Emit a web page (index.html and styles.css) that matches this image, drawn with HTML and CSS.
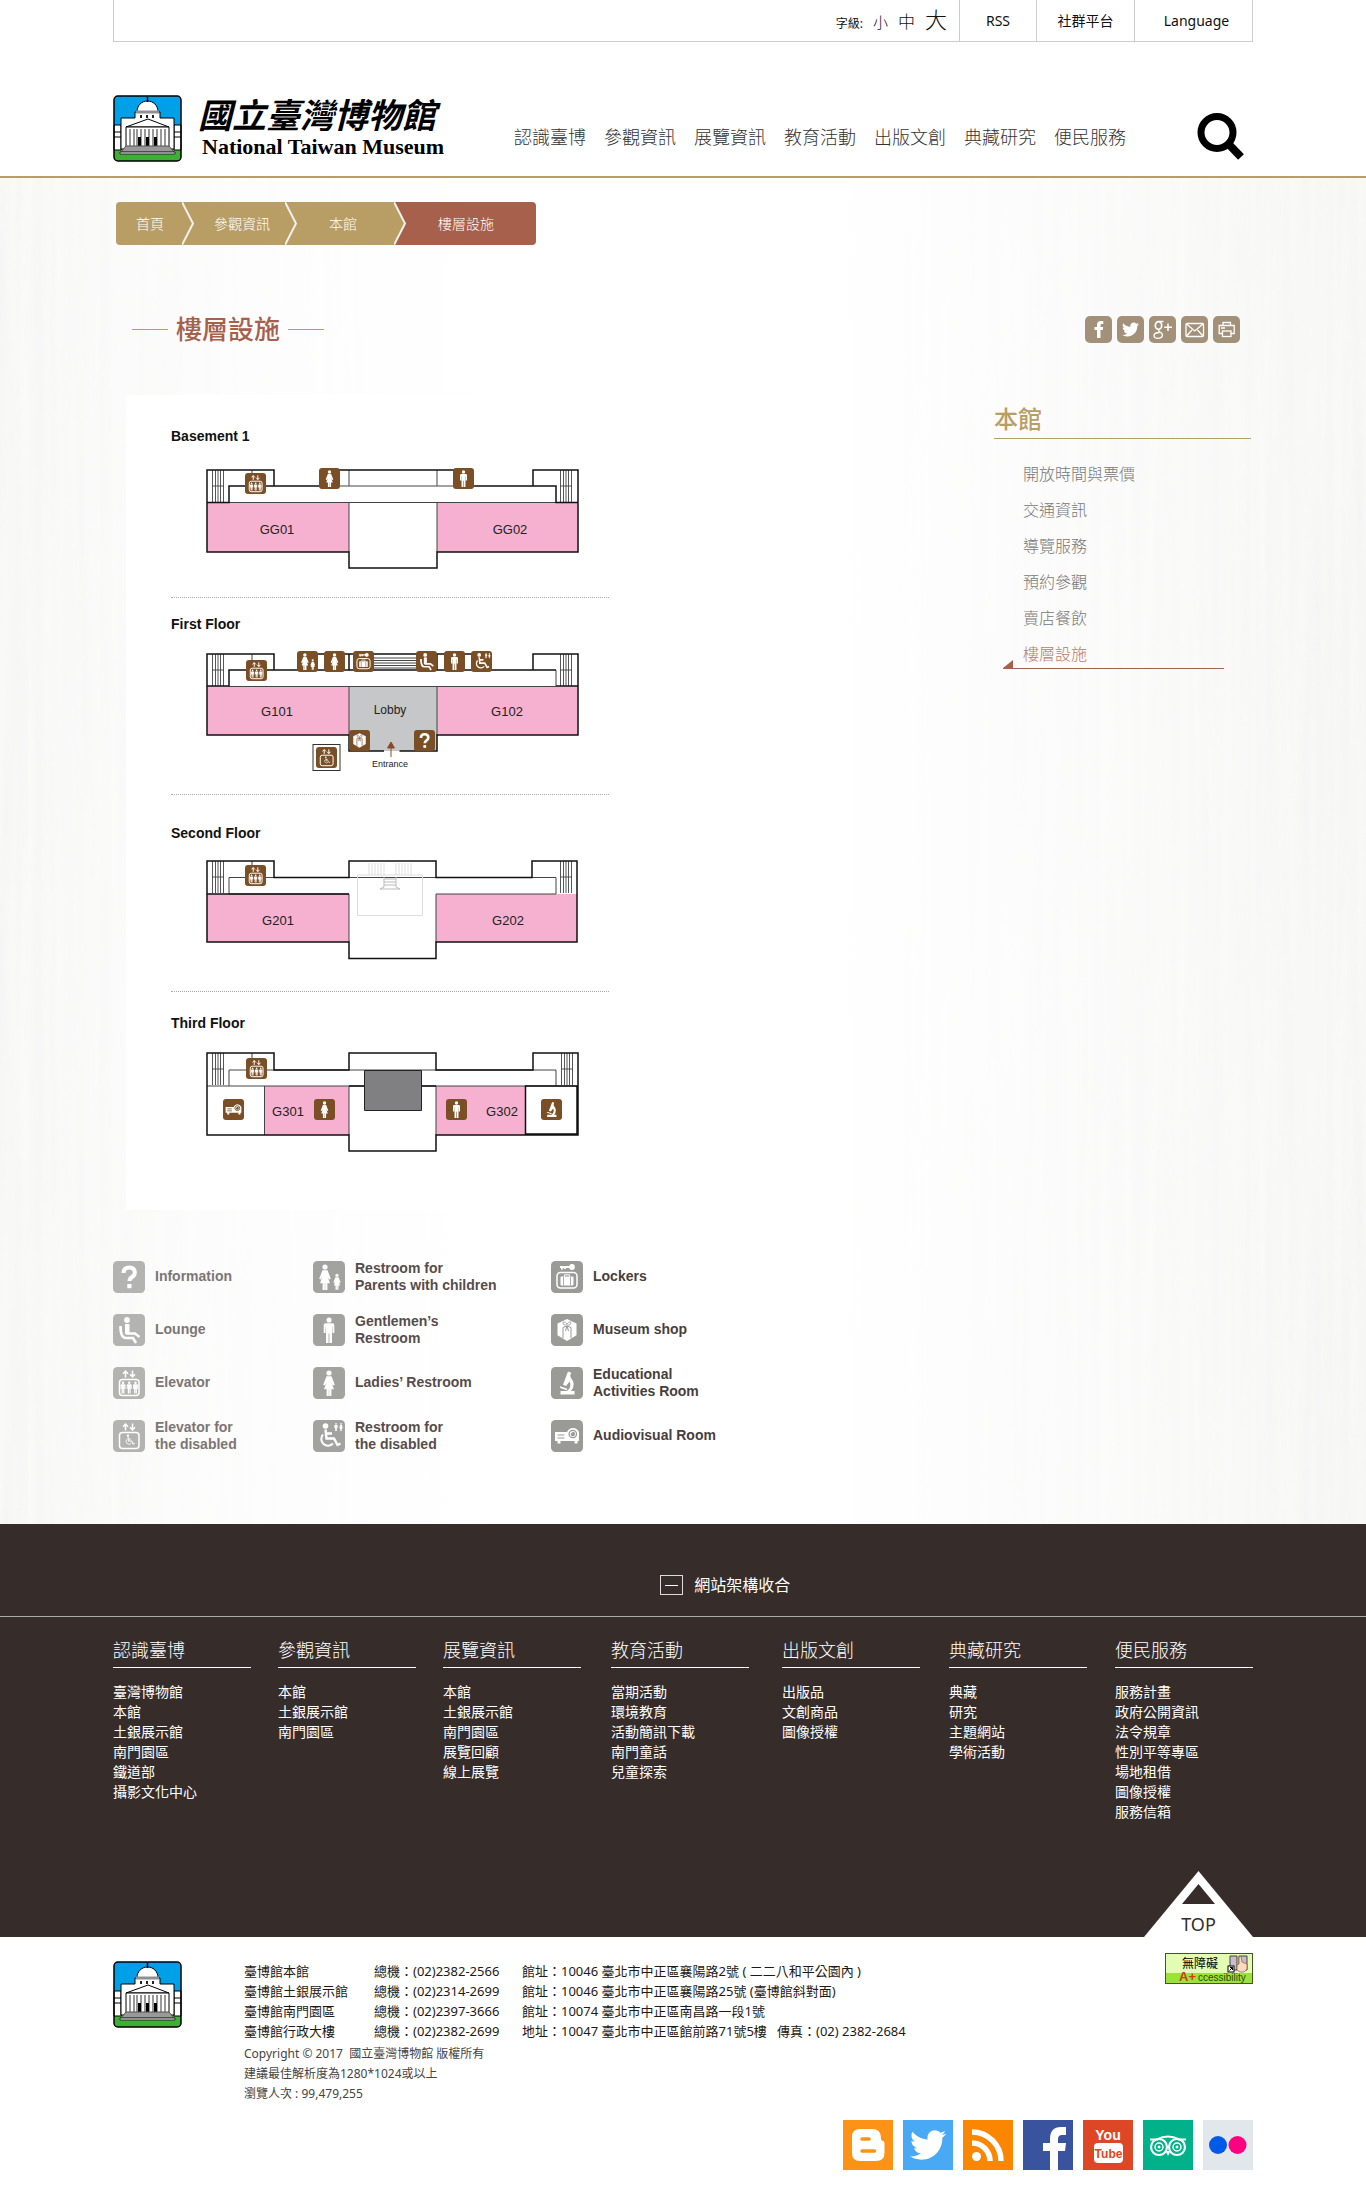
FILE: index.html
```html
<!DOCTYPE html>
<html lang="zh-Hant">
<head>
<meta charset="utf-8">
<meta name="viewport" content="width=device-width, initial-scale=1">
<title>樓層設施 - 國立臺灣博物館</title>
<link rel="stylesheet" href="styles.css">
</head>
<body>
<svg class="sprite" aria-hidden="true">
  <symbol id="museum" viewBox="0 0 69 67">
    <rect x="1" y="1" width="67" height="65" rx="4" fill="#00a0e9"/>
    <path d="M1 54h67v8a4 4 0 0 1-4 4H5a4 4 0 0 1-4-4z" fill="#3fae35"/>
    <path d="M1 30h7v25H1zM61 30h7v25h-7z" fill="#fff" stroke="#000"/>
    <path d="M1 37h7M61 37h7M1 42h7M61 42h7" stroke="#000"/>
    <path d="M8 54V23h14v-6h2C24 10 29 6 34.500 6S45 10 45 17h2v6h14v31z" fill="#fff" stroke="#000"/>
    <path d="M34.500 2v5" stroke="#000" stroke-width="1.500"/>
    <path d="M23 15.500h23v3H23z" fill="#8f8f8f"/>
    <path d="M27 20h2v3h-2zM33 20h2v3h-2zM39 20h2v3h-2z" fill="#222"/>
    <path d="M13 32l22-8 21 8z" fill="#fff" stroke="#000"/>
    <path d="M13 32h43v20H13z" fill="#fff" stroke="#000"/>
    <path d="M17 34v18M21 34v18M24 34v18M28 34v18M32 34v18M36 34v18M40 34v18M44 34v18M48 34v18M52 34v18" stroke="#333"/>
    <path d="M25 42h3v10h-3zM33 42h3v10h-3zM41 42h3v10h-3z" fill="#000"/>
    <path d="M13 51h43l5 6H8z" fill="#999" stroke="#555"/>
    <path d="M7 57h55v2H7z" fill="#ddd" stroke="#000" stroke-width=".7"/>
    <rect x="1" y="1" width="67" height="65" rx="4" fill="none" stroke="#000" stroke-width="1.500"/>
  </symbol>

  <symbol id="woman-shape" viewBox="0 0 32 32">
    <circle cx="16" cy="6" r="2.600"/>
    <path d="M13.500 9.300h5l3.300 8.400-1.700.7-1.700-3.500 2.600 7.300h-2.600V29h-2.200v-6.800h-.4V29h-2.200v-6.800H11l2.600-7.300-1.700 3.500-1.700-.7z"/>
  </symbol>
  <symbol id="man-shape" viewBox="0 0 32 32">
    <circle cx="16" cy="6" r="2.600"/>
    <path d="M12.500 9.300h7q1.800 0 1.800 1.800V19h-1.900v-6H19v16h-2.600V19.500h-.8V29H13V13h-.4v6h-1.900v-7.900q0-1.800 1.800-1.800z"/>
  </symbol>
  <symbol id="chair-shape" viewBox="0 0 32 32">
    <circle cx="12.500" cy="6" r="2.800"/>
    <g fill="none" stroke-width="2.400" stroke="#fff">
      <path d="M12.500 9.500l1 9H21l3.500 6.500 3-1.500M13 13.500h6"/>
      <path d="M10 14.500a6.500 6.500 0 1 0 10 9" stroke-width="2"/>
    </g>
  </symbol>
  <symbol id="arrows-shape" viewBox="0 0 32 32">
    <path d="M12.500 10.500V4M10 6.700L12.500 4 15 6.700M19.500 3.500V10M17 7.300l2.500 2.700L22 7.300" fill="none" stroke="#fff" stroke-width="1.500"/>
  </symbol>

  <symbol id="i-info" viewBox="0 0 32 32">
    <rect width="32" height="32" rx="4.500" fill="currentColor"/>
    <path d="M10.500 12q0-5.500 5.700-5.500 5.600 0 5.600 5 0 3-3 4.800-2.300 1.500-2.300 3.700" fill="none" stroke="#fff" stroke-width="4"/>
    <path d="M14.300 23h4.200v4.200h-4.200z" fill="#fff"/>
  </symbol>
  <symbol id="i-woman" viewBox="0 0 32 32">
    <rect width="32" height="32" rx="4.500" fill="currentColor"/>
    <use href="#woman-shape" width="32" height="32" fill="#fff"/>
  </symbol>
  <symbol id="i-man" viewBox="0 0 32 32">
    <rect width="32" height="32" rx="4.500" fill="currentColor"/>
    <use href="#man-shape" width="32" height="32" fill="#fff"/>
  </symbol>
  <symbol id="i-parents" viewBox="0 0 32 32">
    <rect width="32" height="32" rx="4.500" fill="currentColor"/>
    <use href="#woman-shape" x="-4" width="32" height="32" fill="#fff"/>
    <use href="#woman-shape" x="14" y="10.500" width="20" height="20" fill="#fff"/>
  </symbol>
  <symbol id="i-lounge" viewBox="0 0 32 32">
    <rect width="32" height="32" rx="4.500" fill="currentColor"/>
    <circle cx="14" cy="6" r="2.900" fill="#fff"/>
    <path d="M14.500 10v9.500H22l4.500 3.500M7.500 12q0 12 5.500 12h7l3 5" fill="none" stroke="#fff" stroke-width="2.600"/>
    <path d="M12 10h4.500v10H12z" fill="#fff"/>
  </symbol>
  <symbol id="i-lift" viewBox="0 0 32 32">
    <rect width="32" height="32" rx="4.500" fill="currentColor"/>
    <use href="#arrows-shape" width="32" height="32"/>
    <rect x="6.500" y="12.500" width="19.500" height="16" rx="3" fill="none" stroke="#fff" stroke-width="1.500"/>
    <use href="#man-shape" x="2.500" y="13" width="15" height="15" fill="#fff"/>
    <use href="#man-shape" x="8.700" y="13" width="15" height="15" fill="#fff"/>
    <use href="#man-shape" x="15" y="13" width="15" height="15" fill="#fff"/>
  </symbol>
  <symbol id="i-lift-access" viewBox="0 0 32 32">
    <rect width="32" height="32" rx="4.500" fill="currentColor"/>
    <use href="#arrows-shape" width="32" height="32"/>
    <rect x="6.500" y="12.500" width="19.500" height="16" rx="3" fill="none" stroke="#fff" stroke-width="1.500"/>
    <use href="#chair-shape" x="9.500" y="13" width="14" height="14" fill="#fff"/>
  </symbol>
  <symbol id="i-access" viewBox="0 0 32 32">
    <rect width="32" height="32" rx="4.500" fill="currentColor"/>
    <use href="#chair-shape" width="32" height="32" fill="#fff"/>
    <use href="#man-shape" x="18" y="2" width="10" height="10" fill="#fff"/>
    <use href="#woman-shape" x="23" y="2" width="10" height="10" fill="#fff"/>
  </symbol>
  <symbol id="i-locker" viewBox="0 0 32 32">
    <rect width="32" height="32" rx="4.500" fill="currentColor"/>
    <circle cx="21" cy="6" r="2.900" fill="#fff"/>
    <path d="M9 6h11M11 6v2.500M14 6v2" stroke="#fff" stroke-width="2"/>
    <rect x="6" y="11.500" width="20" height="15.500" rx="3.500" fill="none" stroke="#fff" stroke-width="1.500"/>
    <rect x="9.500" y="15.500" width="13" height="9" rx="1" fill="#fff"/>
    <path d="M13.500 15.500v-1.700h5v1.700" fill="none" stroke="#fff"/>
    <path d="M12.500 16v8.500M19.500 16v8.500" stroke="currentColor" stroke-width=".8"/>
  </symbol>
  <symbol id="i-shop" viewBox="0 0 32 32">
    <rect width="32" height="32" rx="4.500" fill="currentColor"/>
    <path d="M16 5l9.500 4.500v11.700L16 27l-9.500-5.800V9.500z" fill="#fff"/>
    <path d="M12 24V13.500l4-1.500 4 1.500V24M16 12l-1.500 5M16 12l1.500 5" fill="none" stroke="currentColor" stroke-width="1"/>
    <path d="M16 11q-4 1-4-2t4 1q4-4 4-1t-4 2z" fill="#fff" stroke="currentColor" stroke-width=".8"/>
  </symbol>
  <symbol id="i-scope" viewBox="0 0 32 32">
    <rect width="32" height="32" rx="4.500" fill="currentColor"/>
    <path d="M17 4.500l3.200 1.300-1 3 .8 2.200Q25.500 17 20 24h3.500v3.500h-14V24H16q5-4 2.600-9.500L15 19l-3-1.200z" fill="#fff"/>
    <path d="M9 20l7 2.500" stroke="#fff" stroke-width="1.600"/>
  </symbol>
  <symbol id="i-projector" viewBox="0 0 32 32">
    <rect width="32" height="32" rx="4.500" fill="currentColor"/>
    <path d="M4 12h12q2-4 6-4t6 4v9h-1.500v2.500h-3V21h-14v2.500h-3V21H4z" fill="#fff"/>
    <circle cx="21.800" cy="14" r="3.700" fill="#fff" stroke="currentColor" stroke-width="1.300"/>
    <path d="M21.800 11.800a2.200 2.200 0 1 1-2.200 2.200z" fill="currentColor"/>
    <path d="M6.500 15h7M6.500 18h7" stroke="currentColor" stroke-width="1.200"/>
  </symbol>

  <symbol id="bird" viewBox="0 0 24 24">
    <path d="M23.954 4.569c-.885.389-1.830.654-2.825.775 1.014-.611 1.794-1.574 2.163-2.723-.951.555-2.005.959-3.127 1.184-.896-.959-2.173-1.559-3.591-1.559-2.717 0-4.920 2.203-4.920 4.917 0 .39.045.765.127 1.124C7.691 8.094 4.066 6.130 1.640 3.161c-.427.722-.666 1.561-.666 2.475 0 1.710.87 3.213 2.188 4.096-.807-.026-1.566-.248-2.228-.616v.061c0 2.385 1.693 4.374 3.946 4.827-.413.111-.849.171-1.296.171-.314 0-.615-.03-.916-.086.631 1.953 2.445 3.377 4.604 3.417-1.680 1.319-3.809 2.105-6.102 2.105-.39 0-.779-.023-1.170-.067 2.189 1.394 4.768 2.209 7.557 2.209 9.054 0 13.999-7.496 13.999-13.986 0-.209 0-.42-.015-.63.961-.689 1.800-1.560 2.460-2.548z" fill="#fff"/>
  </symbol>
  <symbol id="stairs" viewBox="0 0 12 32">
    <path d="M.5 0v32M3.500 0v32M6 0v32M8.500 0v32M11.500 0v32M0 16h12" stroke="#444" fill="none" stroke-width=".9"/>
  </symbol>
</svg>

<header class="site-header">
  <div class="wrap topbar">
    <div class="font-size">
      <span>字級:</span>
      <button type="button" class="fs-small">小</button>
      <button type="button" class="fs-medium">中</button>
      <button type="button" class="fs-large">大</button>
    </div>
    <a class="cell cell-rss" href="#">RSS</a>
    <a class="cell cell-social" href="#">社群平台</a>
    <a class="cell cell-lang" href="#">Language</a>
  </div>
  <div class="wrap masthead">
    <a class="brand" href="#">
      <svg class="logo" role="img" aria-label="國立臺灣博物館"><use href="#museum"/></svg>
      <span class="brand-text">
        <span class="brand-zh">國立臺灣博物館</span>
        <span class="brand-en">National Taiwan Museum</span>
      </span>
    </a>
    <nav class="main-nav">
      <a href="#">認識臺博</a><a href="#">參觀資訊</a><a href="#">展覽資訊</a><a href="#">教育活動</a><a href="#">出版文創</a><a href="#">典藏研究</a><a href="#">便民服務</a>
    </nav>
    <button type="button" class="search" aria-label="搜尋">
      <svg width="48" height="48" viewBox="0 0 48 48"><circle cx="20" cy="19.500" r="16" fill="none" stroke="#000" stroke-width="7"/><path d="M31.500 31L44 44" stroke="#000" stroke-width="8"/></svg>
    </button>
  </div>
</header>

<main class="page">
  <div class="wrap">
    <nav class="crumbs" aria-label="breadcrumb">
      <a class="crumb" href="#">首頁</a>
      <svg class="chevron" viewBox="0 0 12 43"><path d="M0 0h12v43H0z" fill="#b89d64"/><path d="M0 0l11 21.500L0 43" fill="none" stroke="#f3f0ea" stroke-width="2"/></svg>
      <a class="crumb crumb-2" href="#">參觀資訊</a>
      <svg class="chevron" viewBox="0 0 12 43"><path d="M0 0h12v43H0z" fill="#b89d64"/><path d="M0 0l11 21.500L0 43" fill="none" stroke="#f3f0ea" stroke-width="2"/></svg>
      <a class="crumb crumb-3" href="#">本館</a>
      <svg class="chevron" viewBox="0 0 12 43"><path d="M0 0h12v43H0z" fill="#a6604c"/><path d="M0 0l11 21.500L0 43" fill="#b89d64" stroke="#f3f0ea" stroke-width="2"/></svg>
      <span class="crumb crumb-current">樓層設施</span>
    </nav>

    <div class="title-row">
      <h1>樓層設施</h1>
      <div class="share">
        <a href="#" aria-label="Facebook"><svg viewBox="0 0 27 27"><path d="M12 22v-8h-2.500v-3H12V9q0-4 4-4h2.300v3h-1.600q-1.200 0-1.200 1.400V11h2.700l-.4 3h-2.300v8z" fill="#fff"/></svg></a>
        <a href="#" aria-label="Twitter"><svg viewBox="0 0 27 27"><use href="#bird" x="5" y="5" width="17" height="17"/></svg></a>
        <a href="#" aria-label="Google+"><svg viewBox="0 0 27 27" fill="none" stroke="#fff"><ellipse cx="9.500" cy="9.500" rx="3.200" ry="3.800" stroke-width="1.700"/><path d="M10 5.500h4.500M10.500 13.200q-2 1.300.5 2.800 3 1.500 2.300 4-1 2.300-4.300 2.300-4-.2-4-2.600 0-3 5.500-3.200" stroke-width="1.300"/><path d="M19 7.500v7.500M15.200 11.200H23" stroke-width="1.500"/></svg></a>
        <a href="#" aria-label="Email"><svg viewBox="0 0 27 27" fill="none" stroke="#fff" stroke-width="1.300"><rect x="5" y="7.500" width="17.500" height="13" rx="1"/><path d="M5.500 8l8.200 7 8.300-7M5.500 20l5.500-6M22 20l-5.500-6"/></svg></a>
        <a href="#" aria-label="列印"><svg viewBox="0 0 27 27" fill="none" stroke="#fff" stroke-width="1.300"><path d="M10 17.500H6.200v-8h15v8h-3.700"/><path d="M10 9.500v-3h7.500v3M8 12h4"/><rect x="9.500" y="15" width="8.500" height="5.500"/></svg></a>
      </div>
    </div>

    <div class="columns">
      <div class="content">
        <div class="card">
          <section class="floor">
            <h2>Basement 1</h2>
            <svg class="plan" viewBox="171 446 438 151" width="438" height="151">
              <g class="room"><path d="M207 503h142v49H207zM437 503h141v49H437z"/></g>
              <g class="thin"><path d="M349 470v16M437 470v16M340 486h113M229 502.500h327M349 502v50M437 502v50M252 470v5"/></g>
              <use href="#stairs" x="212" y="470" width="12" height="32"/><use href="#stairs" x="560" y="470" width="12" height="32"/>
              <path class="wall" d="M207 502.500V470h67v16h55v-16h133v16h71v-16h45v82H437v16h-88v-16H207v-49.500h22V486h45M533 486h23v16.500h22"/>
              <use class="pin" href="#i-lift" x="245" y="473" width="21" height="21"/>
              <use class="pin" href="#i-woman" x="319" y="468" width="21" height="21"/>
              <use class="pin" href="#i-man" x="453" y="468" width="21" height="21"/>
              <text x="277" y="534" class="label">GG01</text><text x="510" y="534" class="label">GG02</text>
            </svg>
          </section>
          <section class="floor">
            <h2>First Floor</h2>
            <svg class="plan" viewBox="171 634 438 160" width="438" height="160">
              <g class="room"><path d="M207 686h142v49H207zM437 686h141v49H437z"/></g>
              <path d="M349 686h88v65h-88z" fill="#c6c7c9"/>
              <g class="thin"><path d="M373 658h44M373 660.500h44M373 663h44M373 665.500h44M373 668h44M349 686v50M437 686v50M229 686.500h327M556 670v16M252 654v6"/></g>
              <use href="#stairs" x="212" y="654" width="12" height="32"/><use href="#stairs" x="560" y="654" width="12" height="32"/>
              <path class="wall" d="M207 686V654h67v16h27v-16h181v16h51v-16h45v81H437v16h-37.500M384 751h-35v-16H207v-49h22v-16h304v0h23M556 686h22M349 654v16M437 654v16"/>
              <use class="pin" href="#i-lift" x="246" y="660" width="21" height="21"/>
              <use class="pin" href="#i-parents" x="297" y="651" width="21" height="21"/>
              <use class="pin" href="#i-woman" x="324" y="651" width="21" height="21"/>
              <use class="pin" href="#i-locker" x="353" y="651" width="21" height="21"/>
              <use class="pin" href="#i-lounge" x="416" y="651" width="21" height="21"/>
              <use class="pin" href="#i-man" x="444" y="651" width="21" height="21"/>
              <use class="pin" href="#i-access" x="471" y="651" width="21" height="21"/>
              <use class="pin" href="#i-shop" x="349" y="730" width="21" height="21"/>
              <use class="pin" href="#i-info" x="414" y="730" width="21" height="21"/>
              <rect x="313" y="744.500" width="27" height="26" fill="#fff" stroke="#333"/>
              <use class="pin" href="#i-lift-access" x="316" y="747" width="21" height="21"/>
              <path d="M391 757v-13M387.500 748l3.500-6 3.500 6z" fill="#8a4b2a" stroke="#8a4b2a"/>
              <text x="277" y="716" class="label">G101</text><text x="507" y="716" class="label">G102</text>
              <text x="390" y="714" class="label label-mid">Lobby</text><text x="390" y="767" class="label label-small">Entrance</text>
            </svg>
          </section>
          <section class="floor floor-second">
            <h2>Second Floor</h2>
            <svg class="plan" viewBox="171 843 438 148" width="438" height="148">
              <g class="room"><path d="M207 894h142v48H207zM436 894h141v48H436z"/></g>
              <g class="thin"><path d="M229 894v-16.500h327V894M229 894h120M436 894h120M349 894v48M436 894v48M252 861v5"/></g>
              <g fill="none" stroke="#ddd"><path d="M357.500 875h65v40.500h-65zM369 863v12M372 863v12M375 863v12M378 863v12M381 863v12M384 863v12M396 863v12M399 863v12M402 863v12M405 863v12M408 863v12M411 863v12"/><path d="M384 877v10l-4 2h20l-4-2v-10M384 879h12M384 882h12M384 885h12" stroke="#bbb"/></g>
              <use href="#stairs" x="212" y="861" width="12" height="32"/><use href="#stairs" x="560" y="861" width="12" height="32"/>
              <path class="wall" d="M207 894v-33h67v16.500h75V861h87v16.500h96V861h45v81H436v16.500h-87V942H207v-48h142"/>
              <use class="pin" href="#i-lift" x="245" y="865" width="21" height="21"/>
              <text x="278" y="925" class="label">G201</text><text x="508" y="925" class="label">G202</text>
            </svg>
          </section>
          <section class="floor floor-third">
            <h2>Third Floor</h2>
            <svg class="plan" viewBox="171 1033 438 177" width="438" height="177">
              <g class="room"><path d="M264 1086h85v49h-85zM436 1086h89v49h-89z"/></g>
              <g class="thin"><path d="M229 1086v-16h327v16M207 1086h371M264.500 1086v49M349 1086v49M436 1086v49M252 1053v6"/></g>
              <use href="#stairs" x="212" y="1053" width="12" height="32"/><use href="#stairs" x="561" y="1053" width="12" height="32"/>
              <path class="wall" d="M207 1135v-82h67v17h75v-17h87v17h97v-17h45v82H436v16h-87v-16zM525.500 1086H577v48h-51.500zM349 1086h87"/>
              <path d="M364.500 1070.500h57v40h-57z" fill="#808083" stroke="#222"/>
              <use class="pin" href="#i-lift" x="246" y="1058" width="21" height="21"/>
              <use class="pin" href="#i-projector" x="223" y="1099" width="21" height="21"/>
              <use class="pin" href="#i-woman" x="314" y="1099" width="21" height="21"/>
              <use class="pin" href="#i-man" x="446" y="1099" width="21" height="21"/>
              <use class="pin" href="#i-scope" x="541" y="1099" width="21" height="21"/>
              <text x="288" y="1116" class="label">G301</text><text x="502" y="1116" class="label">G302</text>
            </svg>
          </section>
        </div>

        <ul class="legend">
          <li class="tone-1"><svg><use href="#i-info"/></svg><span>Information</span></li>
          <li class="tone-2"><svg><use href="#i-parents"/></svg><span>Restroom for<br>Parents with children</span></li>
          <li class="tone-3"><svg><use href="#i-locker"/></svg><span>Lockers</span></li>
          <li class="tone-1"><svg><use href="#i-lounge"/></svg><span>Lounge</span></li>
          <li class="tone-2"><svg><use href="#i-man"/></svg><span>Gentlemen’s<br>Restroom</span></li>
          <li class="tone-3"><svg><use href="#i-shop"/></svg><span>Museum shop</span></li>
          <li class="tone-1"><svg><use href="#i-lift"/></svg><span>Elevator</span></li>
          <li class="tone-2"><svg><use href="#i-woman"/></svg><span>Ladies’ Restroom</span></li>
          <li class="tone-3"><svg><use href="#i-scope"/></svg><span>Educational<br>Activities Room</span></li>
          <li class="tone-1"><svg><use href="#i-lift-access"/></svg><span>Elevator for<br>the disabled</span></li>
          <li class="tone-2"><svg><use href="#i-access"/></svg><span>Restroom for<br>the disabled</span></li>
          <li class="tone-3"><svg><use href="#i-projector"/></svg><span>Audiovisual Room</span></li>
        </ul>
      </div>

      <aside class="side">
        <h2>本館</h2>
        <ul>
          <li><a href="#">開放時間與票價</a></li>
          <li><a href="#">交通資訊</a></li>
          <li><a href="#">導覽服務</a></li>
          <li><a href="#">預約參觀</a></li>
          <li><a href="#">賣店餐飲</a></li>
          <li class="active"><a href="#">樓層設施</a></li>
        </ul>
      </aside>
    </div>
  </div>
</main>

<section class="sitemap">
  <div class="sitemap-bar">
    <div class="wrap">
      <button type="button" class="toggle"><span class="minus"></span>網站架構收合</button>
    </div>
  </div>
  <div class="wrap">
    <div class="map-grid">
      <div><h3>認識臺博</h3><ul><li><a href="#">臺灣博物館</a></li><li><a href="#">本館</a></li><li><a href="#">土銀展示館</a></li><li><a href="#">南門園區</a></li><li><a href="#">鐵道部</a></li><li><a href="#">攝影文化中心</a></li></ul></div>
      <div><h3>參觀資訊</h3><ul><li><a href="#">本館</a></li><li><a href="#">土銀展示館</a></li><li><a href="#">南門園區</a></li></ul></div>
      <div><h3>展覽資訊</h3><ul><li><a href="#">本館</a></li><li><a href="#">土銀展示館</a></li><li><a href="#">南門園區</a></li><li><a href="#">展覽回顧</a></li><li><a href="#">線上展覽</a></li></ul></div>
      <div><h3>教育活動</h3><ul><li><a href="#">當期活動</a></li><li><a href="#">環境教育</a></li><li><a href="#">活動簡訊下載</a></li><li><a href="#">南門童話</a></li><li><a href="#">兒童探索</a></li></ul></div>
      <div><h3>出版文創</h3><ul><li><a href="#">出版品</a></li><li><a href="#">文創商品</a></li><li><a href="#">圖像授權</a></li></ul></div>
      <div><h3>典藏研究</h3><ul><li><a href="#">典藏</a></li><li><a href="#">研究</a></li><li><a href="#">主題網站</a></li><li><a href="#">學術活動</a></li></ul></div>
      <div><h3>便民服務</h3><ul><li><a href="#">服務計畫</a></li><li><a href="#">政府公開資訊</a></li><li><a href="#">法令規章</a></li><li><a href="#">性別平等專區</a></li><li><a href="#">場地租借</a></li><li><a href="#">圖像授權</a></li><li><a href="#">服務信箱</a></li></ul></div>
    </div>
    <a class="to-top" href="#">
      <svg width="109" height="66" viewBox="0 0 109 66"><path d="M54.500 0L109 66H0z" fill="#fff"/><path d="M54.500 13L71 33H38z" fill="#362d2b"/><text x="54.500" y="60" text-anchor="middle">TOP</text></svg>
    </a>
  </div>
</section>

<footer class="wrap site-footer">
  <div class="footer-main">
    <svg class="logo" role="img" aria-label="國立臺灣博物館"><use href="#museum"/></svg>
    <div class="contact">
      <table>
        <tr><td>臺博館本館</td><td>總機：(02)2382-2566</td><td>館址：10046 臺北市中正區襄陽路2號 ( 二二八和平公園內 )</td></tr>
        <tr><td>臺博館土銀展示館</td><td>總機：(02)2314-2699</td><td>館址：10046 臺北市中正區襄陽路25號 (臺博館斜對面)</td></tr>
        <tr><td>臺博館南門園區</td><td>總機：(02)2397-3666</td><td>館址：10074 臺北市中正區南昌路一段1號</td></tr>
        <tr><td>臺博館行政大樓</td><td>總機：(02)2382-2699</td><td>地址：10047 臺北市中正區館前路71號5樓&nbsp;&nbsp; 傳真：(02) 2382-2684</td></tr>
      </table>
      <p>Copyright © 2017&nbsp; 國立臺灣博物館 版權所有</p>
      <p>建議最佳解析度為1280*1024或以上</p>
      <p>瀏覽人次 : 99,479,255</p>
    </div>
    <a class="badge" href="#" aria-label="無障礙 A+">
      <svg width="88" height="31" viewBox="0 0 88 31">
        <rect width="88" height="31" fill="#e4fbb4"/><path d="M0 20h88v11H0z" fill="#9be33a"/>
        <rect x=".5" y=".5" width="87" height="30" fill="none" stroke="#3d5a1e"/>
        <path d="M65 3h7v14h-7zM74 3h8v14h-8z" fill="#c9bccb" stroke="#444"/>
        <path d="M72 17v-5l2-1V4l2-1 1 6 5 2v5l-3 3h-4z" fill="#fbd9bd" stroke="#8a5a44" stroke-width=".7"/>
        <rect x="63" y="13" width="6" height="6" fill="#fff" stroke="#000"/><path d="M64.500 17.500l3-3m-2.500 0h2.500V17" stroke="#000" fill="none"/>
        <text x="17" y="15" class="b-zh">無障礙</text>
        <text x="14" y="28" class="b-a">A+</text><text x="33" y="28" class="b-en">ccessibility</text>
      </svg>
    </a>
  </div>
  <div class="social">
    <a href="#" aria-label="Blogger"><svg viewBox="0 0 50 50"><path d="M0 0h50v50H0z" fill="#fc9216"/><path d="M17 9h12q9 0 9 9 0 3 2 3 1.500 0 1.500 2v10q0 8-8.500 8H17q-8 0-8-8V17q0-8 8-8z" fill="#fff"/><path d="M19 19h7M19 31h12.500" stroke="#fc9216" stroke-width="3.500" stroke-linecap="round"/></svg></a>
    <a href="#" aria-label="Twitter"><svg viewBox="0 0 50 50"><path d="M0 0h50v50H0z" fill="#49a9f4"/><use href="#bird" x="7" y="7" width="36" height="36"/></svg></a>
    <a href="#" aria-label="RSS"><svg viewBox="0 0 50 50"><path d="M0 0h50v50H0z" fill="#fb8602"/><circle cx="13.500" cy="36.500" r="4.500" fill="#fff"/><path d="M9 23a18 18 0 0 1 18 18M9 12a29 29 0 0 1 29 29" fill="none" stroke="#fff" stroke-width="5.500"/></svg></a>
    <a href="#" aria-label="Facebook"><svg viewBox="0 0 50 50"><path d="M0 0h50v50H0z" fill="#3a539f"/><path d="M27 50V31h-7v-8h7v-4q0-12 11-12h5v8h-4q-4 0-4 4v4h8l-1 8h-7v19z" fill="#fff"/></svg></a>
    <a href="#" aria-label="YouTube"><svg viewBox="0 0 50 50"><path d="M0 0h50v50H0z" fill="#de4726"/><rect x="11" y="23" width="29" height="20" rx="4" fill="#fff"/><text x="25" y="20" class="yt">You</text><text x="25.500" y="38" class="yt yt-red">Tube</text></svg></a>
    <a href="#" aria-label="TripAdvisor"><svg viewBox="0 0 50 50"><path d="M0 0h50v50H0z" fill="#00b189"/><g fill="none" stroke="#fff"><path d="M7 19.500h7q11-6 22 0h7" stroke-width="2"/><circle cx="16" cy="27" r="8" stroke-width="2.200"/><circle cx="34" cy="27" r="8" stroke-width="2.200"/><circle cx="16" cy="27" r="4" stroke-width="1.500"/><circle cx="34" cy="27" r="4" stroke-width="1.500"/></g><circle cx="16" cy="27" r="1.500" fill="#fff"/><circle cx="34" cy="27" r="1.500" fill="#fff"/><path d="M22.500 31h5L25 36z" fill="#fff"/></svg></a>
    <a href="#" aria-label="Flickr"><svg viewBox="0 0 50 50"><path d="M0 0h50v50H0z" fill="#e2e7eb"/><circle cx="15" cy="25" r="9" fill="#005ae8"/><circle cx="34.500" cy="25" r="9" fill="#ff0080"/></svg></a>
  </div>
</footer>
</body>
</html>
```

FILE: styles.css
```css
* { box-sizing: border-box; }
body {
  margin: 0;
  background: #fff;
  color: #333;
  font-family: "Noto Sans", "Noto Sans CJK TC", sans-serif;
  font-size: 14px;
  line-height: 20px;
}
a { color: inherit; text-decoration: none; }
ul { list-style: none; margin: 0; padding: 0; }
h1, h2, h3, p { margin: 0; }
button { border: 0; padding: 0; background: none; color: inherit; font-family: inherit; cursor: pointer; }
svg { display: block; }
.sprite { display: none; }
.wrap { width: 100%; max-width: 1140px; margin: 0 auto; }
.logo { width: 69px; height: 67px; flex: none; }

/* header */
.site-header { border-bottom: 2px solid #b89d64; }
.topbar {
  display: flex;
  justify-content: flex-end;
  height: 42px;
  border: 1px solid #ccc;
  border-top: 0;
  color: #111;
}
.font-size { display: flex; align-items: baseline; gap: 10px; margin-right: 12px; font-size: 12px; line-height: 38px; }
.font-size button { line-height: 38px; font-weight: 300; }
.fs-small { font-size: 15px; }
.fs-medium { font-size: 17px; }
.fs-large { font-size: 22px; }
.cell { display: flex; align-items: center; justify-content: center; border-left: 1px solid #ccc; }
.cell-rss { width: 77px; }
.cell-social { width: 98px; }
.cell-lang { width: 118px; padding-left: 6px; }
.masthead { display: flex; align-items: flex-start; padding: 53px 0 14px; }
.brand { display: flex; flex: none; width: 401px; color: #000; }
.brand-text { display: flex; flex-direction: column; margin-left: 16px; }
.brand-zh { font-size: 34px; line-height: 38px; font-weight: 700; font-style: italic; font-family: "Noto Sans CJK TC", sans-serif; }
.brand-en { font-family: "Liberation Serif", serif; font-size: 22px; line-height: 28px; font-weight: 700; padding-left: 4px; }
.main-nav { display: flex; gap: 18px; flex: 1; padding-top: 30px; font-size: 18px; line-height: 24px; font-weight: 300; white-space: nowrap; }
.search { margin: 18px 8px 0 0; }

/* page body with wood grain fading to white in the centre */
.page {
  padding: 24px 0 72px;
  background:
    linear-gradient(90deg, rgba(255,255,255,.2) 0%, rgba(255,255,255,.7) 15%, #fff 36%, #fff 60%, rgba(255,255,255,.1) 100%),
    url("data:image/svg+xml,%3Csvg xmlns='http://www.w3.org/2000/svg' width='700' height='700'%3E%3Cfilter id='g' x='0' y='0' width='1' height='1'%3E%3CfeTurbulence type='fractalNoise' baseFrequency='.09 .003' numOctaves='2' seed='4' stitchTiles='stitch'/%3E%3CfeColorMatrix values='0 0 0 0 .5 0 0 0 0 .5 0 0 0 0 .48 .12 0 0 0 0'/%3E%3C/filter%3E%3Crect width='700' height='700' filter='url(%23g)'/%3E%3C/svg%3E"),
    #fafaf9;
}
.crumbs { display: flex; align-items: stretch; width: 420px; height: 43px; margin-left: 3px; border-radius: 4px; overflow: hidden; color: #fff; font-weight: 300; line-height: 43px; white-space: nowrap; }
.crumb { flex: none; width: 66px; padding-left: 20px; background: #b89d64; }
.crumb-2 { width: 91px; }
.crumb-3 { width: 97px; padding-left: 32px; }
.crumb-current { flex: 1; padding-left: 32px; background: #a6604c; }
.chevron { flex: none; width: 12px; height: 43px; }

.title-row { display: flex; align-items: center; justify-content: space-between; height: 40px; margin: 64px 13px 46px 19px; }
.title-row h1 { display: flex; align-items: center; gap: 8px; color: #a6604c; font-size: 26px; line-height: 40px; font-weight: 500; }
.title-row h1::before, .title-row h1::after { content: ""; width: 36px; height: 1px; background: #b89d64; }
.share { display: flex; gap: 5px; }
.share a { width: 27px; height: 27px; border-radius: 5px; background: #a39078; }

.columns { display: flex; justify-content: space-between; }
.content { flex: 1; }
.card { width: 700px; max-width: 100%; margin-left: 13px; padding: 15px 45px 0; background: #fff; color: #111; font-family: "Liberation Sans", sans-serif; }
.floor { width: 438px; max-width: 100%; padding-top: 16px; border-bottom: 1px dotted #aaa; }
.floor:last-child { border-bottom: 0; }
.floor-second { padding-top: 28px; }
.floor-third { padding-top: 21px; }
.floor h2 { font-size: 14px; line-height: 20px; }
.plan { max-width: 100%; height: auto; }
.wall { fill: none; stroke: #111; stroke-width: 1.5; }
.thin { fill: none; stroke: #444; stroke-width: 1; }
.room { fill: #f5b1cf; }
.pin { color: #7b4f26; }
.label { font-size: 13px; text-anchor: middle; fill: #222; }
.label-mid { font-size: 12px; }
.label-small { font-size: 9px; }

.legend { display: grid; grid-template-columns: 200px 238px 1fr; grid-auto-rows: 33px; row-gap: 20px; margin-top: 50px; font: 700 14px/17px "Liberation Sans", sans-serif; }
.legend li { display: flex; align-items: center; gap: 10px; }
.legend svg { flex: none; width: 32px; height: 32px; }
.tone-1 { color: #b3b3b2; }
.tone-2 { color: #a2a2a1; }
.tone-3 { color: #9a9a99; }
.tone-1 span { color: #7d7574; }
.tone-2 span { color: #574c4b; }
.tone-3 span { color: #483e3d; }

.side { flex: none; width: 257px; margin-right: 2px; padding-top: 9px; }
.side h2 { padding-bottom: 4px; border-bottom: 1px solid #b89d64; color: #b89d64; font-size: 24px; line-height: 30px; font-weight: 500; }
.side ul { margin-top: 17px; font-size: 16px; line-height: 36px; font-weight: 300; color: #777; }
.side li { padding-left: 29px; }
.side .active { position: relative; color: #bb7a69; }
.active::before { content: ""; position: absolute; left: 9px; bottom: 4px; border-left: 10px solid transparent; border-bottom: 8px solid #a6604c; }
.active::after { content: ""; position: absolute; left: 9px; right: 27px; bottom: 3px; height: 1px; background: #a6604c; }

/* site map */
.sitemap { background: #362d2b; color: #fff; }
.sitemap-bar { padding: 49px 0 19px; border-bottom: 1px solid #aaa; }
.toggle { display: flex; align-items: center; gap: 11px; margin-left: 48%; font-size: 16px; line-height: 24px; }
.minus { display: flex; align-items: center; justify-content: center; width: 23px; height: 20px; border: 1px solid #ddd; }
.minus::before { content: ""; width: 13px; height: 1px; background: #fff; }
.map-grid { display: grid; grid-template-columns: 165fr 165fr 168fr 171fr 167fr 166fr 138fr; padding-top: 21px; }
.map-grid h3 { max-width: 138px; padding-bottom: 5px; border-bottom: 1px solid #fff; font-size: 18px; line-height: 24px; font-weight: 300; }
.map-grid ul { margin-top: 14px; }
.to-top { display: block; width: 109px; margin: 49px 0 0 auto; }
.to-top text { font-size: 18px; fill: #362d2b; }

/* footer */
.site-footer { padding: 16px 0 17px; }
.footer-main { display: flex; align-items: flex-start; }
.footer-main .logo { margin-top: 8px; }
.contact { flex: 1; margin: 8px 0 0 62px; font-size: 12px; color: #444; }
.contact table { margin-bottom: 3px; border-collapse: collapse; font-size: 13px; line-height: 20px; color: #231815; white-space: nowrap; }
.contact td { padding: 0; height: 20px; }
.contact td:nth-child(1) { width: 130px; }
.contact td:nth-child(2) { width: 148px; }
.b-zh { font: 12px "Noto Sans CJK TC", sans-serif; fill: #000; }
.b-a { font: 700 13px "Liberation Sans", sans-serif; fill: #d03a18; }
.b-en { font: 10px "Liberation Sans", sans-serif; fill: #2c4a12; }
.social { display: flex; justify-content: flex-end; gap: 10px; margin-top: 16px; }
.social a { width: 50px; height: 50px; }
.yt { font: 700 14px "Liberation Sans", sans-serif; text-anchor: middle; fill: #fff; }
.yt-red { font-size: 12px; fill: #de4726; }
```
